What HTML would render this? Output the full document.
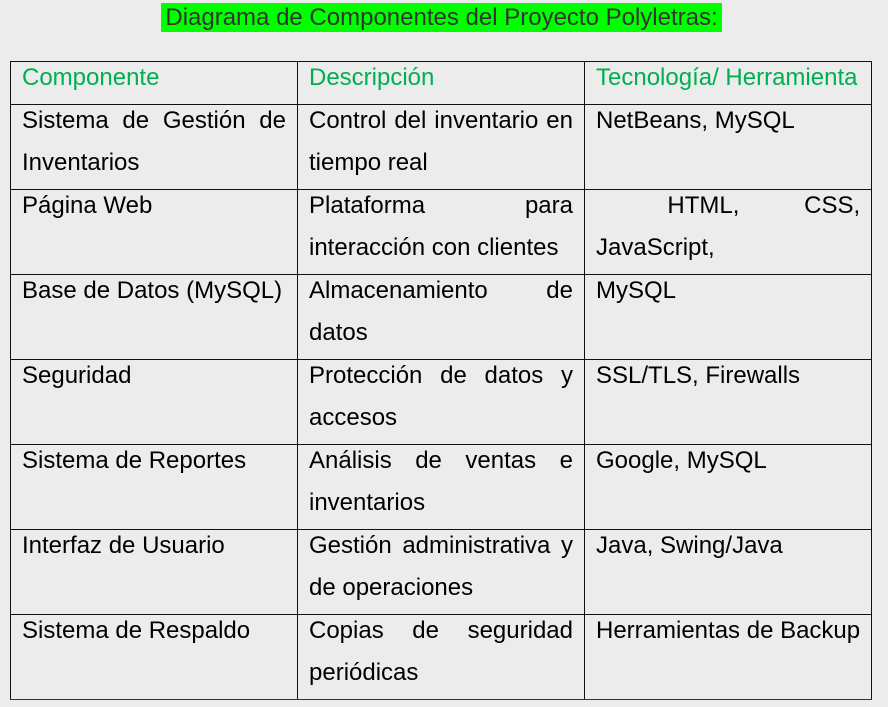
<!DOCTYPE html>
<html><head><meta charset="utf-8"><style>
body{margin:0;width:888px;height:707px;background:#ececec;font-family:"Liberation Sans",Arial,sans-serif;overflow:hidden;position:relative}
.title{position:absolute;left:161px;top:3px;width:561px;height:29px;background:#00ff00;color:#333;font-size:24px;line-height:30px;text-align:center;white-space:nowrap}
table{position:absolute;left:10px;top:61px;border-collapse:collapse;table-layout:fixed}
td{border:1.5px solid #111;padding:0 11px;vertical-align:top;font-size:24px;line-height:42px;color:#000;text-align:justify;text-align-last:left}
td div{margin-top:-5px}
tr{height:85px}
tr.h{height:43px}
tr.h td{color:#00b050;line-height:32px;text-align:left}
tr.h td div{margin-top:0}
tr:last-child td{border-bottom-color:#333}
.sp{display:flex;justify-content:space-between}
</style></head><body>
<div class="title">Diagrama de Componentes del Proyecto Polyletras:</div>
<table>
<colgroup><col style="width:287px"><col style="width:287px"><col style="width:287px"></colgroup>
<tr class="h"><td><div>Componente</div></td><td><div>Descripción</div></td><td><div>Tecnología/ Herramienta</div></td></tr>
<tr><td><div>Sistema de Gestión de Inventarios</div></td><td><div>Control del inventario en tiempo real</div></td><td><div>NetBeans, MySQL</div></td></tr>
<tr><td><div>Página Web</div></td><td><div>Plataforma para interacción con clientes</div></td><td><div><span class="sp"><span>&nbsp;</span><span>HTML,</span><span>CSS,</span></span>JavaScript,</div></td></tr>
<tr><td><div>Base de Datos (MySQL)</div></td><td><div>Almacenamiento de datos</div></td><td><div>MySQL</div></td></tr>
<tr><td><div>Seguridad</div></td><td><div>Protección de datos y accesos</div></td><td><div>SSL/TLS, Firewalls</div></td></tr>
<tr><td><div>Sistema de Reportes</div></td><td><div>Análisis de ventas e inventarios</div></td><td><div>Google, MySQL</div></td></tr>
<tr><td><div>Interfaz de Usuario</div></td><td><div>Gestión administrativa y de operaciones</div></td><td><div>Java, Swing/Java</div></td></tr>
<tr><td><div>Sistema de Respaldo</div></td><td><div>Copias de seguridad periódicas</div></td><td><div style="white-space:nowrap">Herramientas de Backup</div></td></tr>
</table>
</body></html>
